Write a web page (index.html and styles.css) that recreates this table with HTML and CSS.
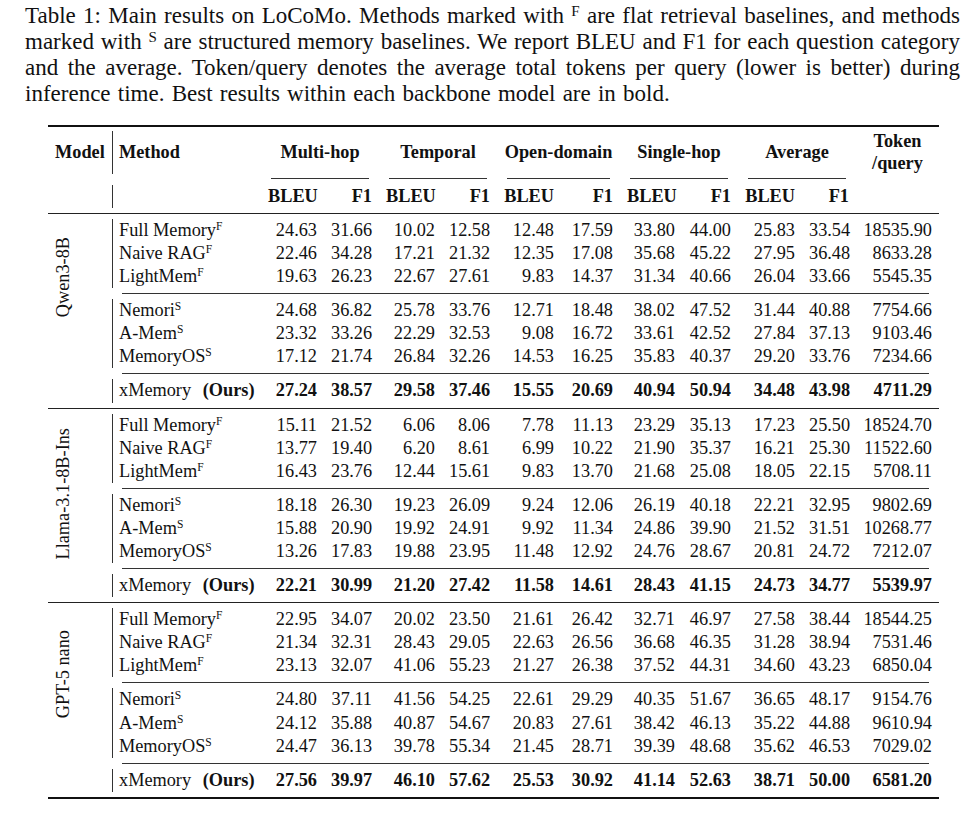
FILE: index.html
```html
<!DOCTYPE html>
<html lang="en">
<head>
  <meta charset="UTF-8" />
  <title>Table 1: Main results on LoCoMo</title>
  <link rel="stylesheet" href="styles.css">
</head>
<body>
  <div class="page">
    <p class="caption">
      <span class="line">Table 1: Main results on LoCoMo. Methods marked with <sup>F</sup> are flat retrieval baselines, and methods</span>
      <span class="line">marked with <sup>S</sup> are structured memory baselines. We report BLEU and F1 for each question category</span>
      <span class="line">and the average. Token/query denotes the average total tokens per query (lower is better) during</span>
      <span class="line last">inference time. Best results within each backbone model are in bold.</span>
    </p>

    <table class="results">
      <colgroup>
        <col class="c-model"><col class="c-method">
        <col class="c-bleu"><col class="c-f1">
        <col class="c-bleu"><col class="c-f1">
        <col class="c-bleu-wide"><col class="c-f1-wide">
        <col class="c-bleu-sh"><col class="c-f1-sh">
        <col class="c-bleu-wide"><col class="c-f1-avg">
        <col class="c-token">
      </colgroup>
      <thead>
        <tr class="rule"><td colspan="13"><div class="toprule"></div></td></tr>
        <tr class="head-1">
          <th class="model-head">Model</th>
          <th class="method">Method</th>
          <th colspan="2" class="group">Multi-hop</th>
          <th colspan="2" class="group">Temporal</th>
          <th colspan="2" class="group">Open-domain</th>
          <th colspan="2" class="group">Single-hop</th>
          <th colspan="2" class="group">Average</th>
          <th class="token">Token<br>/query</th>
        </tr>
        <tr class="rule head-cmid">
          <td></td><td></td>
          <td colspan="2"><div class="cmid"></div></td>
          <td colspan="2"><div class="cmid"></div></td>
          <td colspan="2"><div class="cmid"></div></td>
          <td colspan="2"><div class="cmid"></div></td>
          <td colspan="2"><div class="cmid"></div></td>
          <td></td>
        </tr>
        <tr class="head-2">
          <th></th>
          <th class="method"></th>
          <th class="num">BLEU</th><th class="num">F1</th>
          <th class="num">BLEU</th><th class="num">F1</th>
          <th class="num">BLEU</th><th class="num">F1</th>
          <th class="num">BLEU</th><th class="num">F1</th>
          <th class="num">BLEU</th><th class="num">F1</th>
          <th></th>
        </tr>
        <tr class="rule"><td colspan="13"><div class="midrule head-mid"></div></td></tr>
      </thead>

      <tbody>
        <tr>
          <td rowspan="9" class="model model-qwen"><div class="model-label">Qwen3-8B</div></td>
          <td class="method">Full Memory<sup>F</sup></td>
          <td class="num">24.63</td><td class="num">31.66</td><td class="num">10.02</td><td class="num">12.58</td><td class="num">12.48</td><td class="num">17.59</td><td class="num">33.80</td><td class="num">44.00</td><td class="num">25.83</td><td class="num">33.54</td><td class="num">18535.90</td>
        </tr>
        <tr>
          <td class="method">Naive RAG<sup>F</sup></td>
          <td class="num">22.46</td><td class="num">34.28</td><td class="num">17.21</td><td class="num">21.32</td><td class="num">12.35</td><td class="num">17.08</td><td class="num">35.68</td><td class="num">45.22</td><td class="num">27.95</td><td class="num">36.48</td><td class="num">8633.28</td>
        </tr>
        <tr>
          <td class="method">LightMem<sup>F</sup></td>
          <td class="num">19.63</td><td class="num">26.23</td><td class="num">22.67</td><td class="num">27.61</td><td class="num">9.83</td><td class="num">14.37</td><td class="num">31.34</td><td class="num">40.66</td><td class="num">26.04</td><td class="num">33.66</td><td class="num">5545.35</td>
        </tr>
        <tr class="rule"><td colspan="12"><div class="cmid"></div></td></tr>
        <tr>
          <td class="method">Nemori<sup>S</sup></td>
          <td class="num">24.68</td><td class="num">36.82</td><td class="num">25.78</td><td class="num">33.76</td><td class="num">12.71</td><td class="num">18.48</td><td class="num">38.02</td><td class="num">47.52</td><td class="num">31.44</td><td class="num">40.88</td><td class="num">7754.66</td>
        </tr>
        <tr>
          <td class="method">A-Mem<sup>S</sup></td>
          <td class="num">23.32</td><td class="num">33.26</td><td class="num">22.29</td><td class="num">32.53</td><td class="num">9.08</td><td class="num">16.72</td><td class="num">33.61</td><td class="num">42.52</td><td class="num">27.84</td><td class="num">37.13</td><td class="num">9103.46</td>
        </tr>
        <tr>
          <td class="method">MemoryOS<sup>S</sup></td>
          <td class="num">17.12</td><td class="num">21.74</td><td class="num">26.84</td><td class="num">32.26</td><td class="num">14.53</td><td class="num">16.25</td><td class="num">35.83</td><td class="num">40.37</td><td class="num">29.20</td><td class="num">33.76</td><td class="num">7234.66</td>
        </tr>
        <tr class="rule"><td colspan="12"><div class="cmid"></div></td></tr>
        <tr class="ours">
          <td class="method">xMemory <b class="ours-tag">(Ours)</b></td>
          <td class="num">27.24</td><td class="num">38.57</td><td class="num">29.58</td><td class="num">37.46</td><td class="num">15.55</td><td class="num">20.69</td><td class="num">40.94</td><td class="num">50.94</td><td class="num">34.48</td><td class="num">43.98</td><td class="num">4711.29</td>
        </tr>
        <tr class="rule"><td colspan="13"><div class="midrule"></div></td></tr>

        <tr>
          <td rowspan="9" class="model model-llama"><div class="model-label">Llama-3.1-8B-Ins</div></td>
          <td class="method">Full Memory<sup>F</sup></td>
          <td class="num">15.11</td><td class="num">21.52</td><td class="num">6.06</td><td class="num">8.06</td><td class="num">7.78</td><td class="num">11.13</td><td class="num">23.29</td><td class="num">35.13</td><td class="num">17.23</td><td class="num">25.50</td><td class="num">18524.70</td>
        </tr>
        <tr>
          <td class="method">Naive RAG<sup>F</sup></td>
          <td class="num">13.77</td><td class="num">19.40</td><td class="num">6.20</td><td class="num">8.61</td><td class="num">6.99</td><td class="num">10.22</td><td class="num">21.90</td><td class="num">35.37</td><td class="num">16.21</td><td class="num">25.30</td><td class="num">11522.60</td>
        </tr>
        <tr>
          <td class="method">LightMem<sup>F</sup></td>
          <td class="num">16.43</td><td class="num">23.76</td><td class="num">12.44</td><td class="num">15.61</td><td class="num">9.83</td><td class="num">13.70</td><td class="num">21.68</td><td class="num">25.08</td><td class="num">18.05</td><td class="num">22.15</td><td class="num">5708.11</td>
        </tr>
        <tr class="rule"><td colspan="12"><div class="cmid"></div></td></tr>
        <tr>
          <td class="method">Nemori<sup>S</sup></td>
          <td class="num">18.18</td><td class="num">26.30</td><td class="num">19.23</td><td class="num">26.09</td><td class="num">9.24</td><td class="num">12.06</td><td class="num">26.19</td><td class="num">40.18</td><td class="num">22.21</td><td class="num">32.95</td><td class="num">9802.69</td>
        </tr>
        <tr>
          <td class="method">A-Mem<sup>S</sup></td>
          <td class="num">15.88</td><td class="num">20.90</td><td class="num">19.92</td><td class="num">24.91</td><td class="num">9.92</td><td class="num">11.34</td><td class="num">24.86</td><td class="num">39.90</td><td class="num">21.52</td><td class="num">31.51</td><td class="num">10268.77</td>
        </tr>
        <tr>
          <td class="method">MemoryOS<sup>S</sup></td>
          <td class="num">13.26</td><td class="num">17.83</td><td class="num">19.88</td><td class="num">23.95</td><td class="num">11.48</td><td class="num">12.92</td><td class="num">24.76</td><td class="num">28.67</td><td class="num">20.81</td><td class="num">24.72</td><td class="num">7212.07</td>
        </tr>
        <tr class="rule"><td colspan="12"><div class="cmid"></div></td></tr>
        <tr class="ours">
          <td class="method">xMemory <b class="ours-tag">(Ours)</b></td>
          <td class="num">22.21</td><td class="num">30.99</td><td class="num">21.20</td><td class="num">27.42</td><td class="num">11.58</td><td class="num">14.61</td><td class="num">28.43</td><td class="num">41.15</td><td class="num">24.73</td><td class="num">34.77</td><td class="num">5539.97</td>
        </tr>
        <tr class="rule"><td colspan="13"><div class="midrule"></div></td></tr>

        <tr>
          <td rowspan="9" class="model model-gpt"><div class="model-label">GPT-5 nano</div></td>
          <td class="method">Full Memory<sup>F</sup></td>
          <td class="num">22.95</td><td class="num">34.07</td><td class="num">20.02</td><td class="num">23.50</td><td class="num">21.61</td><td class="num">26.42</td><td class="num">32.71</td><td class="num">46.97</td><td class="num">27.58</td><td class="num">38.44</td><td class="num">18544.25</td>
        </tr>
        <tr>
          <td class="method">Naive RAG<sup>F</sup></td>
          <td class="num">21.34</td><td class="num">32.31</td><td class="num">28.43</td><td class="num">29.05</td><td class="num">22.63</td><td class="num">26.56</td><td class="num">36.68</td><td class="num">46.35</td><td class="num">31.28</td><td class="num">38.94</td><td class="num">7531.46</td>
        </tr>
        <tr>
          <td class="method">LightMem<sup>F</sup></td>
          <td class="num">23.13</td><td class="num">32.07</td><td class="num">41.06</td><td class="num">55.23</td><td class="num">21.27</td><td class="num">26.38</td><td class="num">37.52</td><td class="num">44.31</td><td class="num">34.60</td><td class="num">43.23</td><td class="num">6850.04</td>
        </tr>
        <tr class="rule"><td colspan="12"><div class="cmid"></div></td></tr>
        <tr>
          <td class="method">Nemori<sup>S</sup></td>
          <td class="num">24.80</td><td class="num">37.11</td><td class="num">41.56</td><td class="num">54.25</td><td class="num">22.61</td><td class="num">29.29</td><td class="num">40.35</td><td class="num">51.67</td><td class="num">36.65</td><td class="num">48.17</td><td class="num">9154.76</td>
        </tr>
        <tr>
          <td class="method">A-Mem<sup>S</sup></td>
          <td class="num">24.12</td><td class="num">35.88</td><td class="num">40.87</td><td class="num">54.67</td><td class="num">20.83</td><td class="num">27.61</td><td class="num">38.42</td><td class="num">46.13</td><td class="num">35.22</td><td class="num">44.88</td><td class="num">9610.94</td>
        </tr>
        <tr>
          <td class="method">MemoryOS<sup>S</sup></td>
          <td class="num">24.47</td><td class="num">36.13</td><td class="num">39.78</td><td class="num">55.34</td><td class="num">21.45</td><td class="num">28.71</td><td class="num">39.39</td><td class="num">48.68</td><td class="num">35.62</td><td class="num">46.53</td><td class="num">7029.02</td>
        </tr>
        <tr class="rule"><td colspan="12"><div class="cmid"></div></td></tr>
        <tr class="ours">
          <td class="method">xMemory <b class="ours-tag">(Ours)</b></td>
          <td class="num">27.56</td><td class="num">39.97</td><td class="num">46.10</td><td class="num">57.62</td><td class="num">25.53</td><td class="num">30.92</td><td class="num">41.14</td><td class="num">52.63</td><td class="num">38.71</td><td class="num">50.00</td><td class="num">6581.20</td>
        </tr>
        <tr class="rule"><td colspan="13"><div class="bottomrule"></div></td></tr>
      </tbody>
    </table>
  </div>
</body>
</html>
```

FILE: styles.css
```css
* {
  box-sizing: border-box;
  margin: 0;
  padding: 0;
}

body {
  background: #fff;
  color: #111;
  font-family: "Liberation Serif", "Times New Roman", serif;
}

.page {
  width: 970px;
  padding: 3px 10px 0 25px;
}

/* caption, one justified block per line like the PDF */
.caption {
  width: 935px;
  font-size: 23px;
  line-height: 26px;
}

.caption .line {
  display: block;
  text-align: justify;
  text-align-last: justify;
}

.caption .line.last {
  text-align-last: left;
  word-spacing: 1.5px;
}

.caption sup {
  font-size: 15px;
  line-height: 0;
  vertical-align: 7px;
}

/* table */
.results {
  margin: 18px 0 0 23px;
  width: 891px;
  table-layout: fixed;
  border-collapse: separate;
  border-spacing: 0;
  font-size: 18.3px;
}

.c-model { width: 64px; }
.c-method { width: 149px; }
.c-bleu { width: 63px; }
.c-f1 { width: 55px; }
.c-bleu-wide { width: 64px; }
.c-f1-wide { width: 59px; }
.c-bleu-sh { width: 62px; }
.c-f1-sh { width: 56px; }
.c-f1-avg { width: 54px; }
.c-token { width: 83px; }

.results td,
.results th {
  padding: 0 7px;
  height: 23.1px;
  line-height: 23.1px;
  white-space: nowrap;
  font-weight: normal;
  text-align: left;
  vertical-align: middle;
}

.results th {
  font-weight: bold;
}

.results .num {
  text-align: right;
}

.results .method {
  border-left: 1.3px solid #333;
  padding-left: 6px;
}

.results sup {
  font-size: 11.5px;
  line-height: 0;
  vertical-align: 6px;
}

.ours td {
  font-weight: bold;
}

.ours td.method {
  font-weight: normal;
}

.ours-tag {
  margin-left: 7px;
}

.head-1 th {
  height: 43px;
}

.results th.group,
.results th.token {
  text-align: center;
}

.results th.token {
  line-height: 21.5px;
}

/* booktabs style rules */
.results tr.rule td {
  height: auto;
  line-height: 0;
  padding: 0;
}

.toprule {
  height: 2px;
  margin-bottom: 4px;
  background: #111;
}

.midrule {
  height: 1.3px;
  margin: 5px 0 4.7px;
  background: #222;
}

.head-mid {
  margin: 5px 0 4.5px;
}

.bottomrule {
  height: 2px;
  margin-top: 5px;
  background: #111;
}

.cmid {
  height: 1px;
  margin: 5px 10px;
  background: #333;
}

.head-cmid .cmid {
  margin: 4px 10px 6px;
}

/* rotated backbone names */
.results td.model {
  vertical-align: top;
  padding: 18px 0 0 6px;
}

.results td.model-llama {
  padding-top: 14px;
}

.results td.model-gpt {
  padding-top: 22px;
}

.model-label {
  writing-mode: vertical-rl;
  transform: rotate(180deg);
  line-height: 18px;
  white-space: nowrap;
}
```
